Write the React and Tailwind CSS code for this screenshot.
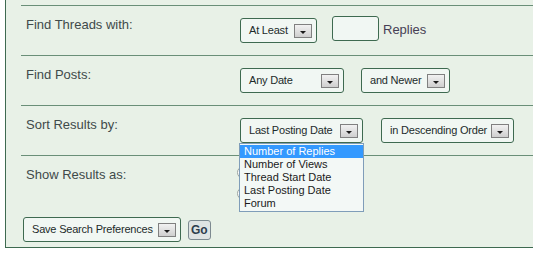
import React from 'react'

const font = { fontFamily: '"Liberation Sans", Arial, sans-serif' }

function Arrow() {
  return (
    <span className="flex h-[14px] w-[18px] shrink-0 items-end justify-center border border-[#808080] bg-gradient-to-b from-[#f2f2f2] to-[#cfcfcf] pb-[3px]">
      <span className="h-0 w-0 border-x-[3px] border-t-[3px] border-x-transparent border-t-[#1a1a1a]" />
    </span>
  )
}

function Select({ label, width }) {
  return (
    <div
      className={`flex h-[25px] shrink-0 items-center justify-between whitespace-nowrap rounded-[3px] border border-[#3e6a50] bg-[#f1f7f3] pl-[8px] pr-[4px] text-[11px] tracking-[-0.2px] text-[#1d2b2b] ${width}`}
    >
      <span>{label}</span>
      <Arrow />
    </div>
  )
}

function Row({ label, children }) {
  return (
    <div className="ml-[15px] flex h-[50px] border-t border-[#6a8f78]">
      <div className="w-[219px] shrink-0 whitespace-nowrap pl-[5px] pt-[11px] text-[13px] leading-[16px] text-[#3f4a4a]">
        {label}
      </div>
      <div className="relative flex flex-1 items-start pt-[12px]">{children}</div>
    </div>
  )
}

const options = ['Number of Replies', 'Number of Views', 'Thread Start Date', 'Last Posting Date', 'Forum']

export default function App() {
  return (
    <div className="h-[253px] w-[533px] overflow-hidden bg-white" style={font}>
      <div className="ml-[5px] h-[248px] border-b border-l border-[#3e6a50] bg-[#e8f1e7] pt-[5px]">
        <Row label="Find Threads with:">
          <Select label="At Least" width="w-[77px]" />
          <div className="ml-[15px] -mt-[2px] h-[25px] w-[47px] shrink-0 rounded-[3px] border border-[#3e6a50] bg-[#f1f7f3]" />
          <span className="ml-[4px] mt-[2px] text-[13px] text-[#463f55]">Replies</span>
        </Row>
        <Row label="Find Posts:">
          <Select label="Any Date" width="w-[104px]" />
          <div className="ml-[17px]">
            <Select label="and Newer" width="w-[89px]" />
          </div>
        </Row>
        <Row label="Sort Results by:">
          <Select label="Last Posting Date" width="w-[123px]" />
          <div className="ml-[18px]">
            <Select label="in Descending Order" width="w-[133px]" />
          </div>
          <div className="absolute left-[-1px] top-[37px] z-10 w-[125px] border border-[#7f9db9] bg-[#f3f8f6] py-[1px] text-[11px] leading-[13px] text-[#1a1a1a]">
            {options.map((o, i) => (
              <div key={o} className={`pl-[4px] ${i === 0 ? 'bg-[#3399ff] text-white' : ''}`}>
                {o}
              </div>
            ))}
          </div>
        </Row>
        <div className="ml-[15px] h-[62px] border-t border-[#6a8f78]">
          <div className="flex">
            <div className="w-[219px] shrink-0 whitespace-nowrap pl-[5px] pt-[11px] text-[13px] leading-[16px] text-[#3f4a4a]">
              Show Results as:
            </div>
            <div className="-ml-[3px] flex flex-col gap-[8px] pt-[10px]">
              <span className="h-[13px] w-[13px] rounded-full border border-[#9aa3a0] bg-white" />
              <span className="h-[13px] w-[13px] rounded-full border border-[#9aa3a0] bg-white" />
            </div>
          </div>
        </div>
        <div className="ml-[17px] flex items-center">
          <Select label="Save Search Preferences" width="w-[158px]" />
          <button className="ml-[7px] h-[20px] rounded-[3px] border border-[#7d8a90] bg-[#dfe3e3] px-[2px] text-[12px] font-bold leading-[16px] text-[#2d3d4d]">
            Go
          </button>
        </div>
      </div>
    </div>
  )
}
